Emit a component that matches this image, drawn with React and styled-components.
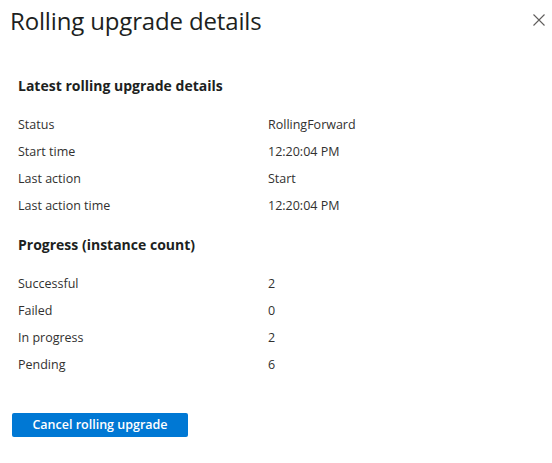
import React from "react";
import styled, { createGlobalStyle } from "styled-components";

const Global = createGlobalStyle`
  html, body { margin: 0; padding: 0; background: #fff; }
  body { font-family: "Segoe UI", "Open Sans", "Noto Sans", sans-serif; color: #323130; }
`;

const Panel = styled.div`
  width: 552px;
  height: 463px;
  box-sizing: border-box;
  display: flex;
  flex-direction: column;
`;

const Header = styled.div`
  display: flex;
  align-items: center;
  justify-content: space-between;
  height: 40px;
  padding: 0 6px 0 10px;
`;

const Title = styled.h1`
  margin: 0;
  font-size: 24px;
  font-weight: 400;
  color: #201f1e;
  letter-spacing: -0.15px;
`;

const Close = styled.button`
  border: 0;
  background: none;
  padding: 0;
  width: 14px;
  height: 14px;
  display: flex;
  cursor: pointer;
`;

const Body = styled.div`
  padding: 34px 18px 0 18px;
  display: flex;
  flex-direction: column;
`;

const SectionTitle = styled.h2`
  margin: 0 0 13px 0;
  font-size: 14px;
  font-weight: 700;
  color: #201f1e;
  line-height: 24px;
`;

const Grid = styled.div`
  display: grid;
  grid-template-columns: 250px 1fr;
  grid-auto-rows: 27px;
  align-items: center;
  font-size: 12.5px;
  margin-bottom: ${p => p.$mb}px;
`;

const Cell = styled.div`
  line-height: 27px;
`;

const Footer = styled.div`
  padding: 0 12px;
`;

const Primary = styled.button`
  background: #0078d4;
  color: #fff;
  border: 0;
  border-radius: 2px;
  height: 24px;
  width: 176px;
  font-family: inherit;
  font-size: 12.5px;
  font-weight: 600;
  cursor: pointer;
`;

const Rows = ({ items, mb }) => (
  <Grid $mb={mb}>
    {items.map(([k, v]) => (
      <React.Fragment key={k}>
        <Cell>{k}</Cell>
        <Cell>{v}</Cell>
      </React.Fragment>
    ))}
  </Grid>
);

export default function App() {
  return (
    <>
      <Global />
      <Panel>
        <Header>
          <Title>Rolling upgrade details</Title>
          <Close aria-label="Close">
            <svg width="14" height="14" viewBox="0 0 14 14">
              <path d="M1.5 1.5 L12.5 12.5 M12.5 1.5 L1.5 12.5" stroke="#605e5c" strokeWidth="1.1" />
            </svg>
          </Close>
        </Header>
        <Body>
          <SectionTitle>Latest rolling upgrade details</SectionTitle>
          <Rows
            mb={14}
            items={[
              ["Status", "RollingForward"],
              ["Start time", "12:20:04 PM"],
              ["Last action", "Start"],
              ["Last action time", "12:20:04 PM"],
            ]}
          />
          <SectionTitle>Progress (instance count)</SectionTitle>
          <Rows
            mb={34}
            items={[
              ["Successful", "2"],
              ["Failed", "0"],
              ["In progress", "2"],
              ["Pending", "6"],
            ]}
          />
        </Body>
        <Footer>
          <Primary>Cancel rolling upgrade</Primary>
        </Footer>
      </Panel>
    </>
  );
}
